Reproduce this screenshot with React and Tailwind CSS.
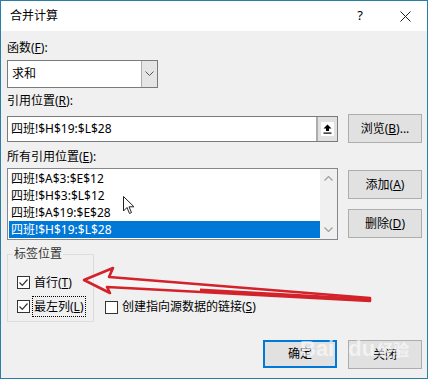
const font = { fontFamily: '"Segoe UI", "Noto Sans", "Noto Sans CJK SC", sans-serif' };

function Check({ checked }) {
  return (
    <span className="w-[13px] h-[13px] border border-[#333333] bg-white flex items-center justify-center shrink-0">
      {checked && (
        <svg width="11" height="11" viewBox="0 0 11 11">
          <path d="M1.5 5.5 L4.3 8.3 L9.5 2.5" fill="none" stroke="#333" strokeWidth="1.2" />
        </svg>
      )}
    </span>
  );
}

function Btn({ children, primary }) {
  return (
    <div
      className={
        "w-[74px] flex items-center justify-center bg-[#e1e1e1] text-[12px] text-black " +
        (primary ? "h-[28px] border-2 border-[#0078d7]" : "h-[29px] border border-[#adadad]")
      }
    >
      {children}
    </div>
  );
}

const refs = ["四班!$A$3:$E$12", "四班!$H$3:$L$12", "四班!$A$19:$E$28", "四班!$H$19:$L$28"];

export default function App() {
  return (
    <div className="w-[430px] h-[381px] bg-white relative overflow-hidden" style={font}>
      <div className="w-[428px] h-[379px] border border-[#2b7ea6] flex flex-col">
        {/* title bar */}
        <div className="h-[30px] bg-white flex items-center pl-[9px] text-[12px] text-black">
          <span>合并计算</span>
          <span className="ml-auto mr-[37px] text-[13px]">?</span>
          <svg width="11" height="11" viewBox="0 0 11 11" className="mr-[16px]">
            <path d="M0.5 0.5 L10.5 10.5 M10.5 0.5 L0.5 10.5" stroke="#222" strokeWidth="1" />
          </svg>
        </div>

        {/* body */}
        <div className="flex-1 bg-[#f0f0f0] pl-[6px] pr-[5px] text-[12px] text-black leading-[16px]">
          <div className="mt-[9px]">函数(<u>F</u>):</div>
          <div className="mt-[4px] w-[151px] h-[28px] border border-[#7a7a7a] bg-white flex">
            <span className="flex-1 pl-[4px] flex items-center">求和</span>
            <span className="w-[16px] bg-[#e5e5e5] border-l border-[#adadad] flex items-center justify-center">
              <svg width="9" height="6" viewBox="0 0 9 6">
                <path d="M0.5 0.5 L4.5 4.5 L8.5 0.5" fill="none" stroke="#555" strokeWidth="1" />
              </svg>
            </span>
          </div>

          <div className="mt-[5px]">引用位置(<u>R</u>):</div>
          <div className="mt-[5px] flex items-center gap-[10px]">
            <div className="w-[331px] h-[26px] border border-[#7a7a7a] bg-white flex">
              <span className="flex-1 pl-[3px] flex items-center">四班!$H$19:$L$28</span>
              <span className="w-[21px] bg-[#e1e1e1] border-l-2 border-[#adadad] flex items-center justify-center">
                <span className="w-[13px] h-[14px] bg-white flex items-center justify-center">
                  <svg width="9" height="10" viewBox="0 0 9 10">
                    <path d="M4.5 0.5 L8.5 4.5 L6 4.5 L6 7 L3 7 L3 4.5 L0.5 4.5 Z" fill="#000" />
                    <rect x="0.5" y="8.5" width="8" height="1.2" fill="#000" />
                  </svg>
                </span>
              </span>
            </div>
            <Btn>浏览(<u>B</u>)...</Btn>
          </div>

          <div className="mt-[6px]">所有引用位置(<u>E</u>):</div>
          <div className="mt-[3px] flex gap-[10px] items-start">
            <div className="w-[331px] h-[72px] border border-[#828790] bg-white flex">
              <div className="flex-1 pt-[1px] pl-[1px]">
                {refs.map((r, i) => (
                  <div
                    key={r}
                    className={
                      "h-[17px] pl-[2px] flex items-center " +
                      (i === 3 ? "bg-[#0078d7] text-white" : "")
                    }
                  >
                    {r}
                  </div>
                ))}
              </div>
              <div className="w-[17px] bg-[#f0f0f0] flex flex-col items-center justify-between py-[7px]">
                <svg width="9" height="5" viewBox="0 0 9 5">
                  <path d="M0.5 4.5 L4.5 0.5 L8.5 4.5" fill="none" stroke="#a0a0a0" strokeWidth="1.2" />
                </svg>
                <svg width="9" height="5" viewBox="0 0 9 5">
                  <path d="M0.5 0.5 L4.5 4.5 L8.5 0.5" fill="none" stroke="#a0a0a0" strokeWidth="1.2" />
                </svg>
              </div>
            </div>
            <div className="flex flex-col gap-[10px] mt-[2px]">
              <Btn>添加(<u>A</u>)</Btn>
              <Btn>删除(<u>D</u>)</Btn>
            </div>
          </div>

          {/* label position group */}
          <div className="mt-[14px] flex items-start">
            <div className="relative w-[87px] h-[68px] border border-[#dcdcdc] pl-[9px] pt-[21px] flex flex-col">
              <span className="absolute -top-[9px] left-[5px] px-[1px] bg-[#f0f0f0] text-[#333]">标签位置</span>
              <div className="h-[13px] flex items-center gap-[4px]">
                <Check checked />
                <span>首行(<u>T</u>)</span>
              </div>
              <div className="mt-[7px] flex items-center gap-[2px]">
                <Check checked />
                <span className="px-[1px] py-[2px] border border-dotted border-black leading-[15px]">最左列(<u>L</u>)</span>
              </div>
            </div>
            <div className="ml-[11px] mt-[45px] flex items-center gap-[4px]">
              <Check />
              <span>创建指向源数据的链接(<u>S</u>)</span>
            </div>
          </div>

          <div className="mt-[18px] flex justify-end gap-[11px]">
            <Btn primary>确定</Btn>
            <Btn>关闭</Btn>
          </div>
        </div>
      </div>

      {/* mouse cursor */}
      <svg className="absolute left-[123px] top-[196px] pointer-events-none" width="12" height="19" viewBox="0 0 12 19">
        <path d="M0.5 0.5 L0.5 15 L4 11.5 L6.5 17.5 L8.5 16.5 L6 10.8 L11 10.8 Z" fill="#fff" stroke="#222" strokeWidth="1" />
      </svg>

      {/* red arrow annotation */}
      <svg className="absolute left-0 top-0 pointer-events-none" width="430" height="381" viewBox="0 0 430 381">
        <path
          d="M84 280 L113 268 L109 277 L370 298 L370 301 L107 287 L110 293 Z"
          fill="rgba(255,255,255,0.35)"
          stroke="#d3222a"
          strokeWidth="2.6"
          strokeLinejoin="round"
        />
        <path d="M200 290 L370 299.5" stroke="#d3222a" strokeWidth="3" />
      </svg>

      {/* watermark */}
      <div className="absolute left-[300px] top-[338px] pointer-events-none text-white/60 font-bold text-[22px] leading-none" style={{ fontFamily: '"Liberation Sans", sans-serif' }}>
        Bai<span className="ml-[14px]">du</span>
        <span className="text-[16px] ml-[2px]" style={{ fontFamily: '"Noto Sans CJK SC", sans-serif' }}>经验</span>
      </div>
    </div>
  );
}
